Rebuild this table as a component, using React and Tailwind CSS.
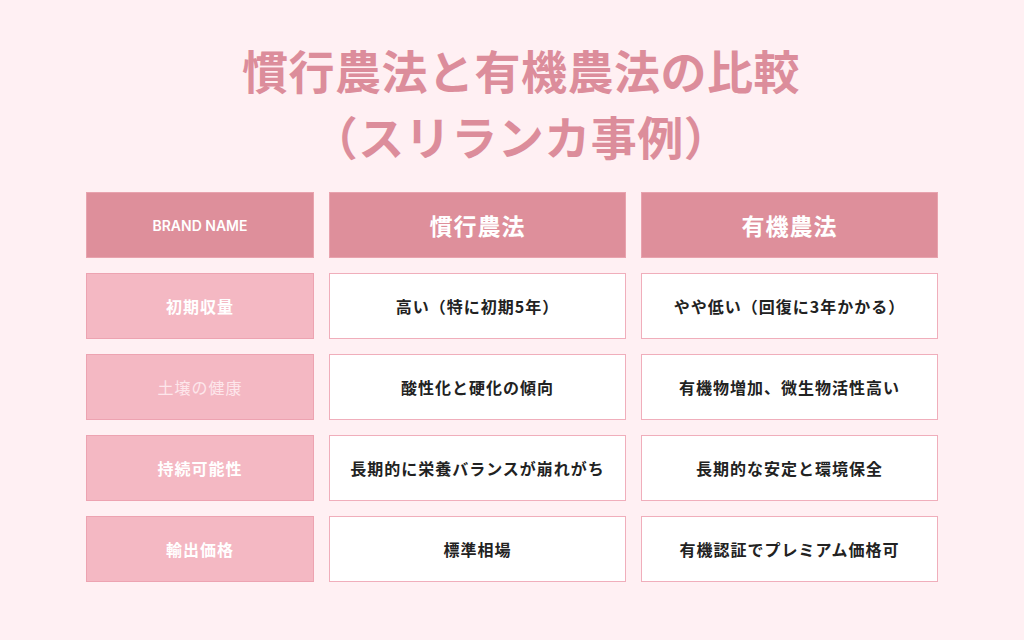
const rows = [
  { label: '初期収量', a: '高い（特に初期5年）', b: 'やや低い（回復に3年かかる）' },
  { label: '土壌の健康', a: '酸性化と硬化の傾向', b: '有機物増加、微生物活性高い', light: true },
  { label: '持続可能性', a: '長期的に栄養バランスが崩れがち', b: '長期的な安定と環境保全' },
  { label: '輸出価格', a: '標準相場', b: '有機認証でプレミアム価格可' },
];

export default function App() {
  return (
    <div
      className="w-[1024px] h-[640px] bg-[#fff0f3] flex flex-col items-center"
      style={{ fontFamily: '"Noto Sans CJK JP", Inter, "Noto Sans", sans-serif' }}
    >
      <h1 className="mt-[36px] pl-[18px] text-[46px] leading-[66px] tracking-[0.5px] font-bold text-[#dc8d9b] text-center">
        慣行農法と有機農法の比較
        <br />
        （スリランカ事例）
      </h1>

      <div className="mt-[24px] grid grid-cols-[228px_297px_297px] gap-[15px] auto-rows-[66px]">
        <div
          className="bg-[#de8f9b] border border-[#e8a3ae] flex items-center justify-center text-white text-[14px] font-semibold"
          style={{ fontFamily: 'Inter, "Noto Sans", sans-serif' }}
        >
          BRAND NAME
        </div>
        <div className="bg-[#de8f9b] border border-[#e8a3ae] flex items-center justify-center text-white text-[23px] font-bold tracking-[1px]">
          慣行農法
        </div>
        <div className="bg-[#de8f9b] border border-[#e8a3ae] flex items-center justify-center text-white text-[23px] font-bold tracking-[1px]">
          有機農法
        </div>

        {rows.map((r) => [
          <div
            key={r.label + 'l'}
            className={`bg-[#f4b8c3] border border-[#eda3b1] flex items-center justify-center text-[16px] tracking-[1px] ${
              r.light ? 'text-[#fde6eb] font-normal' : 'text-white font-bold'
            }`}
          >
            {r.label}
          </div>,
          <div
            key={r.label + 'a'}
            className="bg-white border border-[#f0aebb] flex items-center justify-center text-[16px] tracking-[1px] font-bold text-[#222]"
          >
            {r.a}
          </div>,
          <div
            key={r.label + 'b'}
            className="bg-white border border-[#f0aebb] flex items-center justify-center text-[16px] tracking-[1px] font-bold text-[#222]"
          >
            {r.b}
          </div>,
        ])}
      </div>
    </div>
  );
}
